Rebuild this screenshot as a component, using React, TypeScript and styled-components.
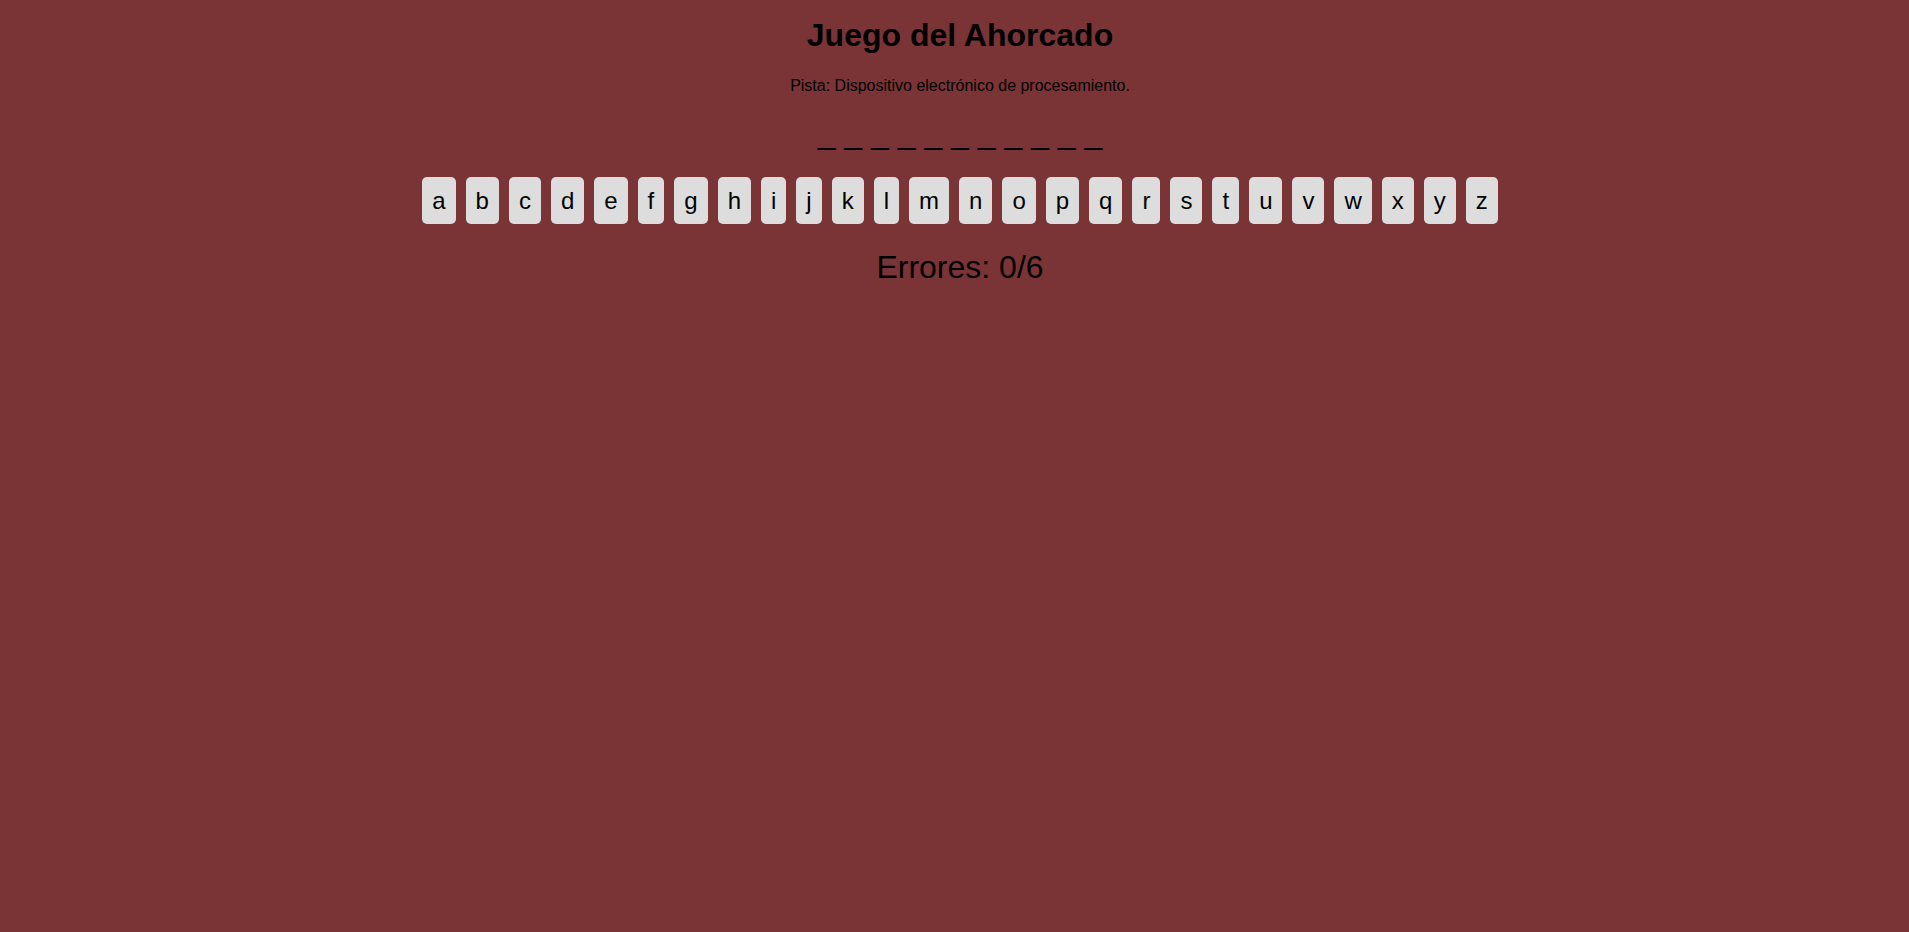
import React, { useState } from "react";
import styled, { createGlobalStyle } from "styled-components";

const GlobalStyle = createGlobalStyle`
  html, body {
    margin: 0;
    padding: 0;
    background-color: #7b3436;
  }
  body {
    font-family: "Liberation Sans", Arial, Helvetica, sans-serif;
    color: #000000;
  }
`;

const Page = styled("div")`
  min-height: 932px;
  display: flex;
  flex-direction: column;
  align-items: center;
  padding: 17px 0 0 11px;
  box-sizing: border-box;
`;

const Title = styled("h1")`
  font-size: 32px;
  font-weight: 700;
  line-height: 37px;
  margin: 0;
`;

const Hint = styled("p")`
  font-size: 16px;
  margin: 23px 0 0;
`;

const Word = styled("p")`
  font-size: 32px;
  line-height: 37px;
  margin: 20px 0 0;
  white-space: pre;
`;

const Keyboard = styled("div")`
  display: flex;
  flex-wrap: wrap;
  justify-content: center;
  gap: 10px;
  margin-top: 25px;
`;

interface IKeyProps {
  used: boolean;
}
const Key = styled("button")<IKeyProps>`
  font-family: "Liberation Sans", Arial, Helvetica, sans-serif;
  font-size: 24px;
  line-height: 27px;
  padding: 10px;
  border: none;
  border-radius: 5px;
  background-color: ${(props) => (props.used ? "#aaaaaa" : "#dddddd")};
  color: #000000;
  cursor: pointer;
  &:hover {
    opacity: 0.85;
  }
`;

const Errors = styled("p")`
  font-size: 32px;
  line-height: 37px;
  margin: 25px 0 0;
`;

const WORD = "computadora";
const LETTERS = "abcdefghijklmnopqrstuvwxyz".split("");

export default function App() {
  const [guessed, setGuessed] = useState<string[]>([]);
  const errors = guessed.filter((l) => !WORD.includes(l)).length;
  const shown = WORD.split("")
    .map((l) => (guessed.includes(l) ? l : "_"))
    .join(" ");

  return (
    <>
      <GlobalStyle />
      <Page>
        <Title>Juego del Ahorcado</Title>
        <Hint>Pista: Dispositivo electrónico de procesamiento.</Hint>
        <Word>{shown}</Word>
        <Keyboard>
          {LETTERS.map((l) => (
            <Key
              key={l}
              used={guessed.includes(l)}
              onClick={() => !guessed.includes(l) && setGuessed([...guessed, l])}
            >
              {l}
            </Key>
          ))}
        </Keyboard>
        <Errors>Errores: {errors}/6</Errors>
      </Page>
    </>
  );
}
